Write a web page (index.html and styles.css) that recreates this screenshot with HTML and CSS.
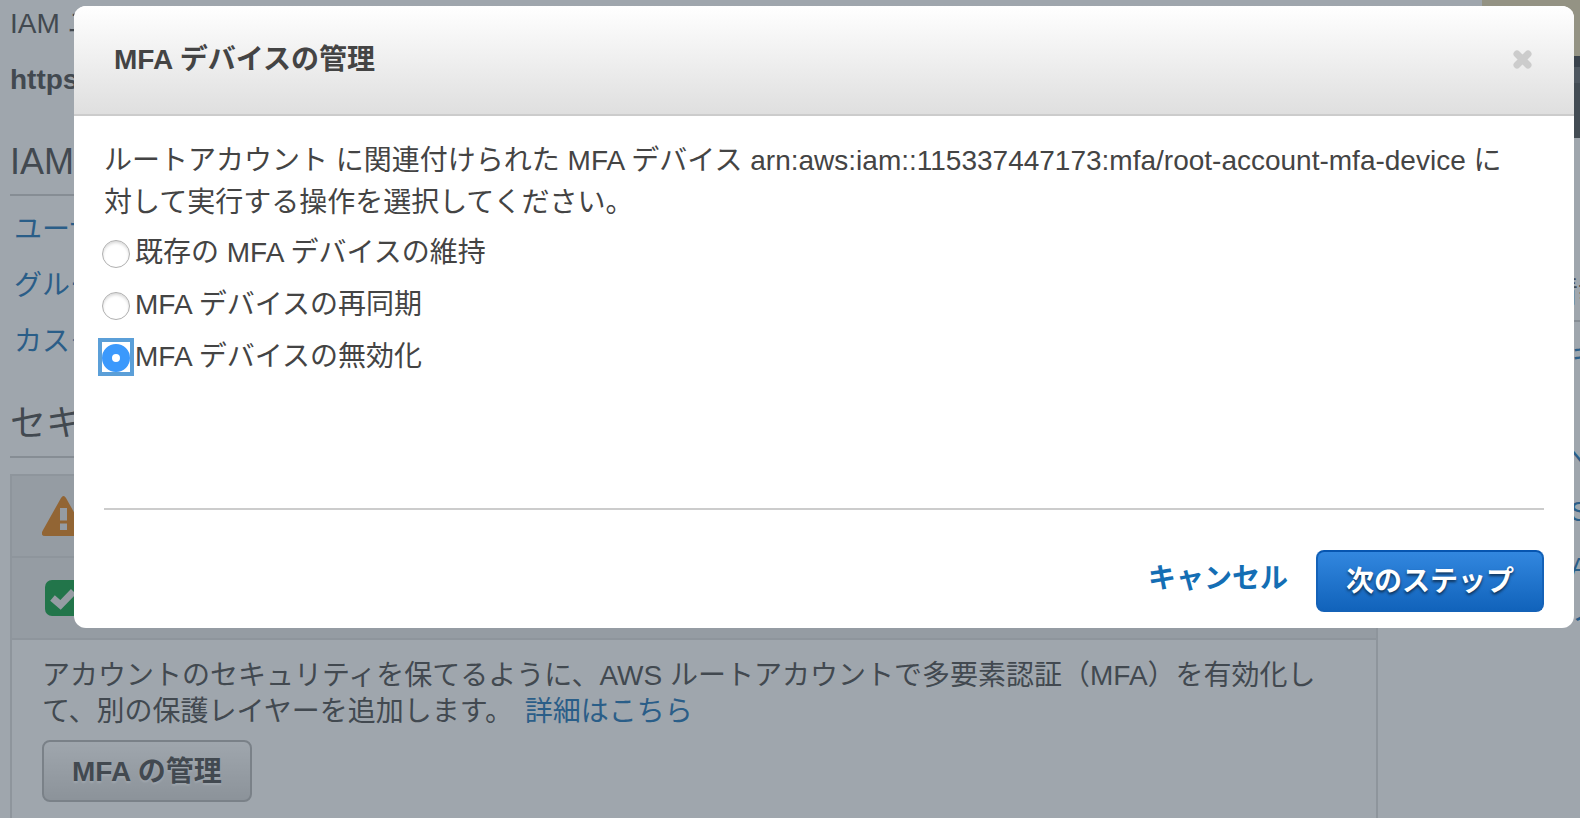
FILE: index.html
```html
<!DOCTYPE html>
<html lang="ja">
<head>
    <meta charset="UTF-8">
    <meta name="viewport" content="width=device-width, initial-scale=1.0">
    <title>IAM Management Console</title>
    <link rel="stylesheet" href="styles.css">
</head>
<body>
    <div class="page">
        <main class="main">
            <p class="signin-label">IAM ユーザーのサインインリンク:</p>
            <p class="signin-url">https://</p>

            <h2>IAM リソース</h2>
            <ul class="resources">
                <li><a href="#">ユーザー</a></li>
                <li><a href="#">グループ</a></li>
                <li><a href="#">カスタマー管理ポリシー</a></li>
            </ul>

            <h2>セキュリティステータス</h2>
            <div class="status">
                <div class="status-row">
                    <svg class="status-icon" viewBox="0 0 44 40" aria-hidden="true">
                        <path class="warning" fill-rule="evenodd" d="M19 2Q21.500-2 24 2L42.500 35Q44.500 40 40 40H3Q-1.500 40 .5 35ZM18 12V24.500H25V12ZM18 27.500V34H25V27.500Z"/>
                    </svg>
                </div>
                <div class="status-row">
                    <svg class="status-icon" viewBox="0 0 44 40" aria-hidden="true">
                        <rect class="success" x="3" y="2" width="36" height="36" rx="7"/>
                        <path class="tick" d="M10.500 20L18.500 27L31.500 13.500"/>
                    </svg>
                </div>
                <div class="status-detail">
                    <p>アカウントのセキュリティを保てるように、AWS ルートアカウントで多要素認証（MFA）を有効化して、別の保護レイヤーを追加します。 <a href="#">詳細はこちら</a></p>
                    <button class="button" type="button">MFA の管理</button>
                </div>
            </div>
        </main>

        <aside class="sidebar">
            <div class="video"></div>
            <h3>追加情報</h3>
            <ul class="links">
                <li><a href="#">IAM ドキュメント</a></li>
                <li><a href="#">IAM<br>AWS ヘルプ</a></li>
                <li><a href="#">動画、SAML</a></li>
                <li><a href="#">履歴、AWS<br>IAM のノート</a></li>
            </ul>
        </aside>
    </div>

    <div class="overlay">
        <form class="modal" role="dialog" aria-labelledby="modal-title">
            <div class="modal-header">
                <h1 id="modal-title">MFA デバイスの管理</h1>
                <button class="close" type="button" aria-label="閉じる">
                    <svg viewBox="0 0 22 22" aria-hidden="true"><path d="M5 5L16 16M16 5L5 16"/></svg>
                </button>
            </div>
            <div class="modal-body">
                <p>ルートアカウント に関連付けられた MFA デバイス arn:aws:iam::115337447173:mfa/root-account-mfa-device に対して実行する操作を選択してください。</p>
                <div class="options">
                    <div class="option">
                        <input type="radio" name="action" id="keep">
                        <label for="keep">既存の MFA デバイスの維持</label>
                    </div>
                    <div class="option">
                        <input type="radio" name="action" id="resync">
                        <label for="resync">MFA デバイスの再同期</label>
                    </div>
                    <div class="option">
                        <input type="radio" name="action" id="deactivate" checked>
                        <label for="deactivate">MFA デバイスの無効化</label>
                    </div>
                </div>
            </div>
            <div class="modal-footer">
                <a class="cancel" href="#">キャンセル</a>
                <button class="button primary" type="submit">次のステップ</button>
            </div>
        </form>
    </div>
</body>
</html>
```
FILE: styles.css
```css
:root {
    --text-color: #444;
    --link-color: #146eb4;
    --line-color: #ccc;
    --panel-line: #ddd;
}

*,
*::before {
    margin: 0;
    padding: 0;
    box-sizing: border-box;
}

body {
    height: 100vh;
    overflow: hidden;
    font-family: "Liberation Sans", "Noto Sans CJK JP", sans-serif;
    font-size: 28px;
    line-height: 36px;
    color: var(--text-color);
    background: #fff;
}

a {
    color: var(--link-color);
    text-decoration: none;
}

ul {
    list-style: none;
}

/* Dashboard behind the dialog */
.page {
    display: grid;
    grid-template-columns: minmax(0, 1fr) 98px;
    column-gap: 104px;
    padding-left: 10px;
}

.main {
    padding-top: 6px;
    white-space: nowrap;
}

.signin-url {
    margin-top: 20px;
    font-weight: bold;
}

.main h2 {
    padding-bottom: 8px;
    border-bottom: 2px solid var(--line-color);
    font-size: 36px;
    font-weight: normal;
    line-height: 48px;
}

.signin-url + h2 {
    margin-top: 40px;
}

.resources {
    padding: 6px 4px;
}

.resources li {
    line-height: 56px;
}

.resources + h2 {
    margin-top: 24px;
}

.status {
    margin-top: 16px;
    border: 2px solid var(--panel-line);
}

.status-row {
    display: flex;
    align-items: center;
    height: 82px;
    padding-left: 30px;
    background: #eaeaea;
    border-bottom: 2px solid var(--panel-line);
}

.status-icon {
    width: 44px;
    height: 40px;
}

.warning {
    fill: #e47c0c;
}

.success {
    fill: #049c38;
}

.tick {
    fill: none;
    stroke: #eaeaea;
    stroke-width: 7;
}

.status-detail {
    padding: 18px 30px 30px;
    white-space: normal;
}

.status-detail a {
    margin-left: 4px;
}

.button {
    height: 62px;
    padding: 2px 28px 0;
    border: 2px solid #b4b4b4;
    border-radius: 8px;
    background: linear-gradient(#fff, #d8d8d8);
    color: var(--text-color);
    font-family: inherit;
    font-size: 28px;
    font-weight: bold;
    line-height: 36px;
    text-shadow: 0 2px 2px #fff;
    cursor: pointer;
}

.status-detail .button {
    display: block;
    margin-top: 10px;
}

.sidebar {
    white-space: nowrap;
    overflow: hidden;
}

.video {
    height: 138px;
    background: linear-gradient(#e8d8ac 56px, #32363c 56px, #32363c 67px, #5c6064 67px, #5c6064 83px, #464a4c 83px);
}

.sidebar h3 {
    margin-top: 132px;
    padding-bottom: 6px;
    border-bottom: 2px solid var(--line-color);
    font-size: 32px;
    font-weight: normal;
    line-height: 44px;
}

.links {
    padding: 12px 4px;
}

.links li {
    margin-bottom: 12px;
    line-height: 44px;
}

/* Dialog */
.overlay {
    position: fixed;
    inset: 0;
    padding: 6px 6px 0 74px;
    background: rgba(64, 78, 92, 0.5);
}

.modal {
    background: #fff;
    border-radius: 12px;
    overflow: hidden;
}

.modal-header {
    display: flex;
    align-items: center;
    justify-content: space-between;
    height: 110px;
    padding: 0 40px;
    border-bottom: 2px solid var(--line-color);
    background: linear-gradient(#fff, #dfdfdf);
}

.modal-header h1 {
    font-size: 28px;
    line-height: 36px;
}

.close {
    width: 22px;
    height: 22px;
    border: 0;
    background: none;
    cursor: pointer;
}

.close svg {
    display: block;
}

.close path {
    stroke: #ccc;
    stroke-width: 7;
    stroke-linecap: round;
}

.modal-body {
    min-height: 392px;
    margin: 0 30px;
    padding-top: 24px;
    line-height: 42px;
}

.modal-body p {
    padding-right: 20px;
}

.options {
    margin-top: 3px;
    margin-left: -2px;
}

.option {
    display: flex;
    align-items: center;
    gap: 5px;
    height: 52px;
}

.option input {
    display: flex;
    align-items: flex-end;
    appearance: none;
    width: 28px;
    height: 30px;
}

.option input::before {
    content: '';
    width: 28px;
    height: 28px;
    border: 1px solid #b0b0b0;
    border-radius: 50%;
    background: #fff;
    box-shadow: inset 0 2px 3px rgba(0, 0, 0, 0.15);
}

.option input:checked {
    outline: 4px solid #5b9fd8;
}

.option input:checked::before {
    border: 10px solid #3b99fc;
    box-shadow: none;
}

.modal-footer {
    display: flex;
    align-items: center;
    justify-content: flex-end;
    gap: 28px;
    margin: 0 30px;
    padding: 40px 0 16px;
    border-top: 2px solid var(--line-color);
}

.cancel {
    padding-bottom: 4px;
    font-weight: bold;
}

.primary {
    border-color: #0655b0 #1462b8 #1462b8;
    background: linear-gradient(#3287df, #1163bb);
    color: #fff;
    text-shadow: 0 2px 3px rgba(0, 0, 0, 0.6);
}
```
